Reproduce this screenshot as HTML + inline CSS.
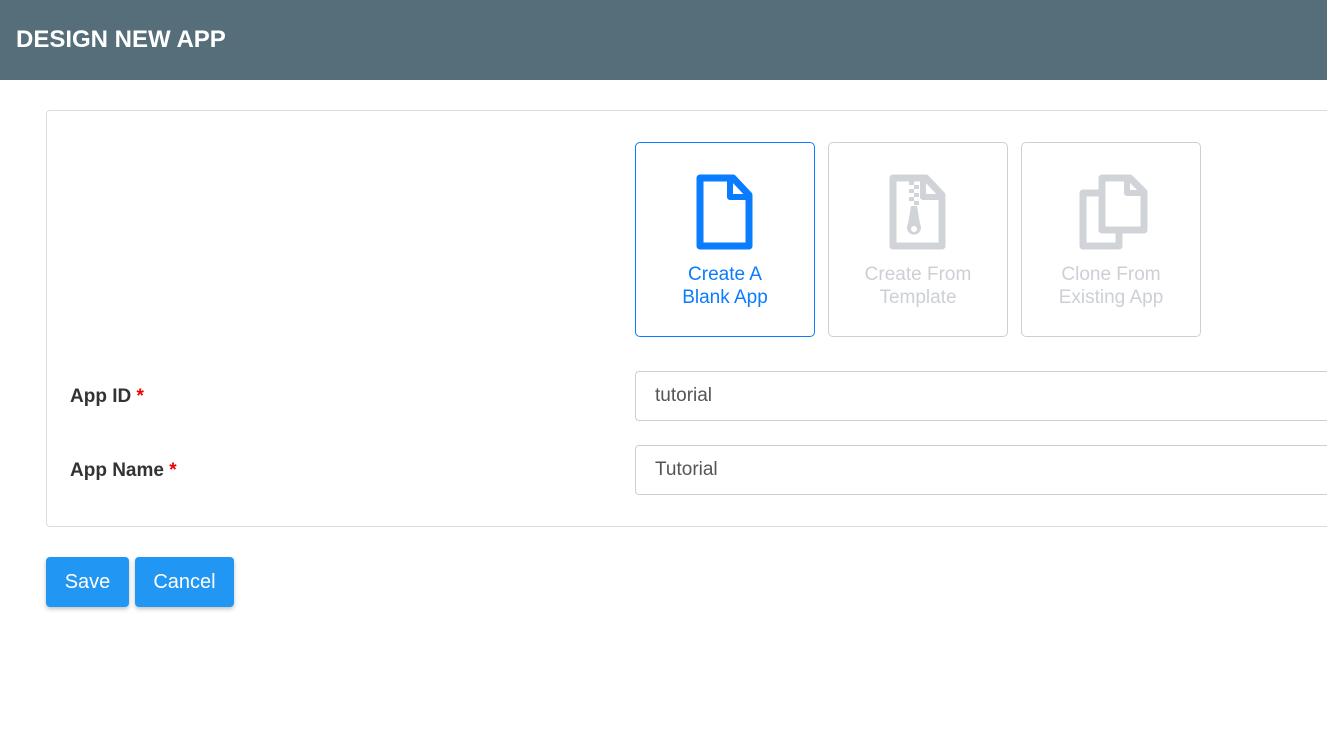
<!DOCTYPE html>
<html><head><style>
body{margin:0;width:1327px;height:740px;overflow:hidden;background:#fff;font-family:"Liberation Sans",Arial,sans-serif;position:relative}
.hdr{position:absolute;left:0;top:0;width:1327px;height:80px;background:#566e7a;color:#fff;font-weight:bold;font-size:24px;line-height:80px;padding-left:16px;box-sizing:border-box}
.panel{position:absolute;left:46px;top:110px;width:1300px;height:417px;border:1px solid #dcdcdc;border-radius:4px;box-sizing:border-box}
.card{position:absolute;top:142px;width:180px;height:195px;border:1px solid #ccd0d6;border-radius:5px;box-sizing:border-box;text-align:center;color:#ccd0d6;font-size:19px;line-height:23px}
.card.sel{border-color:#0a7cff;color:#0a7cff}
.card svg{position:absolute;top:31px}
.card .t{position:absolute;top:120px;left:0;right:0}
.lbl{position:absolute;left:70px;font-weight:bold;font-size:19px;color:#333}
.lbl span{color:#e00}
.inp{position:absolute;left:635px;width:720px;height:50px;border:1px solid #ccd0d6;border-radius:4px;box-sizing:border-box;font-size:19px;color:#555;line-height:48px;padding-left:19px}
.btn{position:absolute;top:557px;height:50px;background:#2196f3;color:#fff;font-size:20px;line-height:50px;text-align:center;border-radius:4px;box-shadow:0 2px 4px rgba(0,0,0,.25)}
</style></head><body>
<div class="hdr">DESIGN NEW APP</div>
<div class="panel"></div>
<div class="card sel" style="left:635px">
<svg style="left:60px" width="58" height="76" viewBox="0 0 58 76"><path d="M4,4 H37 L53,21 V72 H4 Z" fill="none" stroke="#0a7cff" stroke-width="7" stroke-linejoin="round"/><path d="M34,4 V23 H53" fill="none" stroke="#0a7cff" stroke-width="6" stroke-linejoin="round"/></svg>
<div class="t">Create A<br>Blank App</div></div>
<div class="card" style="left:828px">
<svg style="left:60px" width="58" height="76" viewBox="0 0 58 76"><path d="M4,4 H37 L53,21 V72 H4 Z" fill="none" stroke="#d0d4d9" stroke-width="7" stroke-linejoin="round"/><path d="M34,4 V23 H53" fill="none" stroke="#d0d4d9" stroke-width="6" stroke-linejoin="round"/>
<g fill="#d0d4d9"><rect x="20" y="7" width="5" height="4"/><rect x="25" y="11" width="5" height="4"/><rect x="20" y="15" width="5" height="4"/><rect x="25" y="19" width="5" height="4"/><rect x="20" y="23" width="5" height="4"/><rect x="25" y="27" width="5" height="4"/><path d="M22,32 H28 L31,50 A7,7 0 1 1 19,50 Z"/></g><circle cx="25" cy="55" r="3" fill="#fff"/></svg>
<div class="t">Create From<br>Template</div></div>
<div class="card" style="left:1021px">
<svg style="left:56px" width="70" height="76" viewBox="0 0 70 76"><path d="M22,19 H5 V72 H41 V58" fill="none" stroke="#d0d4d9" stroke-width="7" stroke-linejoin="round"/><path d="M24,4 H52 L66,18 V56 H24 Z" fill="none" stroke="#d0d4d9" stroke-width="7" stroke-linejoin="round"/><path d="M49,4 V19 H66" fill="none" stroke="#d0d4d9" stroke-width="6" stroke-linejoin="round"/></svg>
<div class="t">Clone From<br>Existing App</div></div>
<div class="lbl" style="top:386px">App ID <span>*</span></div>
<div class="inp" style="top:371px">tutorial</div>
<div class="lbl" style="top:460px">App Name <span>*</span></div>
<div class="inp" style="top:445px">Tutorial</div>
<div class="btn" style="left:46px;width:83px">Save</div>
<div class="btn" style="left:135px;width:99px">Cancel</div>
</body></html>
